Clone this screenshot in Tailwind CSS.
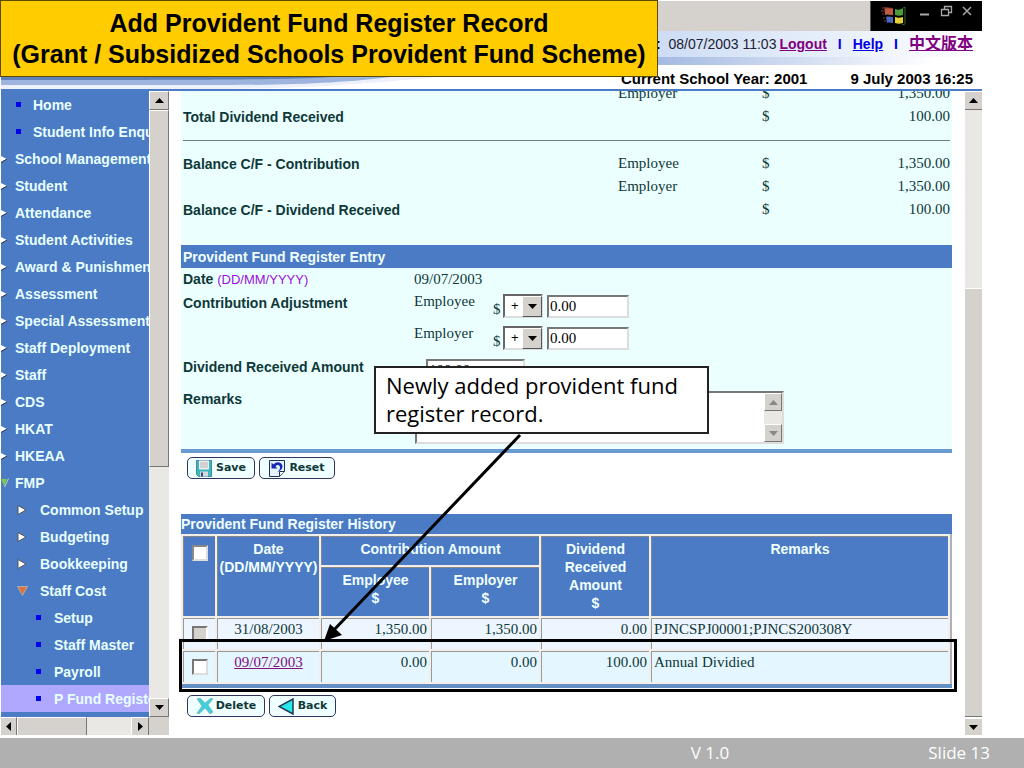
<!DOCTYPE html>
<html lang="en">
<head>
    <meta charset="UTF-8">
    <meta name="viewport" content="width=device-width, initial-scale=1.0">
    <title>Add Provident Fund Register Record</title>
    <script src="https://cdn.jsdelivr.net/npm/@tailwindcss/browser@4"></script>
</head>
<body class="relative flex flex-col min-h-screen bg-white font-['Liberation_Sans',sans-serif]">

    <!-- Browser window -->
    <div class="flex flex-col flex-1 ml-px mr-[42px] mb-[3px]">

        <header class="flex flex-col h-[91px] border-b-2 border-[#4a7bc4]">
            <div class="flex h-[31px] bg-[#d5d1cd] border-t border-white">
                <div class="flex ml-auto w-[112px] bg-black border-l border-[#555] pl-[10px] pr-2 pt-[3px] items-start">
                    <svg class="w-7 h-6" viewBox="0 0 28 24">
                        <path d="M3 3l9 1v7l-8-1z" fill="#8c3b2c"/>
                        <path d="M4 5c3-1 5 0 8 0v6c-3 0-5-1-8 0z" fill="#c05a40"/>
                        <path d="M14 5c3 1 5 1 8-1v7c-3 1-5 1-8 0z" fill="#4f9b3c"/>
                        <path d="M5 13c3-1 5 0 7 0v6c-2 0-4-1-6 0z" fill="#4b66b8"/>
                        <path d="M14 13c3 1 5 1 8 0v6c-3 1-5 1-8 0z" fill="#e2cf3a"/>
                        <path d="M22 4l2-1v17l-3 1" fill="none" stroke="#2f6a35"/>
                        <path d="M1 4h2M0 7h3M1 10h2M2 14h2M3 17h2" stroke="#7a3a30"/>
                    </svg>
                    <svg class="ml-auto w-[54px] h-4" viewBox="0 0 54 16" fill="none" stroke="#a8a8a8">
                        <path d="M0 10.500h9" stroke-width="2"/>
                        <path d="M24.500 5.500v-3h7v6h-3M21.500 5.500h7v6h-7z" stroke-width="1.300"/>
                        <path d="M43 3l8 8M51 3l-8 8" stroke-width="1.500"/>
                    </svg>
                </div>
            </div>
            <div class="flex items-center justify-end h-[26px] pr-[9px] gap-[11px] text-sm whitespace-nowrap bg-linear-to-r from-[#c3d5f2] from-60% to-white">
                <span class="-mr-2 text-black"><b>Login :</b>&nbsp; <span class="text-[#223]">08/07/2003 11:03</span></span>
                <a href="#" class="font-bold underline text-[#800080]">Logout</a>
                <b class="text-[#0000e0]">I</b>
                <a href="#" class="font-bold underline text-[#0000e0]">Help</a>
                <b class="text-[#0000e0]">I</b>
                <a href="#" class="font-bold underline text-base text-[#800080] font-['Liberation_Sans','Noto_Sans_CJK_TC',sans-serif]">中文版本</a>
            </div>
            <div class="h-2 bg-linear-to-r from-[#8ea9da] from-60% to-white to-95%"></div>
            <div class="relative flex flex-1 items-end justify-end pr-[9px] gap-[43px] text-[15px] leading-5 font-bold text-black whitespace-nowrap">
                <svg class="absolute left-0 bottom-0 w-[440px] h-3" viewBox="0 0 440 12" preserveAspectRatio="none">
                    <path d="M0 0h440C400 3 330 11 230 12H0z" fill="#eef1fb"/>
                    <path d="M0 0h390C350 5 300 8 230 8H0z" fill="#9db4de"/>
                    <path d="M0 0h330C300 2 260 3 0 3z" fill="#5f80bb"/>
                </svg>
                <span>Current School Year: 2001</span>
                <span>9 July 2003 16:25</span>
            </div>
        </header>

        <div class="flex flex-1">

            <!-- Menu -->
            <div class="flex flex-col w-[168px]">
                <div class="flex flex-1">
                    <nav class="w-[148px] overflow-hidden bg-[#4a7bc4] text-sm font-bold text-[#e8ffff] whitespace-nowrap">
                        <a href="#" class="flex items-center h-[27px] pl-[15px] gap-3"><i class="w-[5px] h-[5px] shrink-0 bg-[#0000f0]"></i>Home</a>
                        <a href="#" class="flex items-center h-[27px] pl-[15px] gap-3"><i class="w-[5px] h-[5px] shrink-0 bg-[#0000f0]"></i>Student Info Enquiry</a>
                        <a href="#" class="flex items-center h-[27px] gap-2"><svg class="w-[6px] h-2 shrink-0" viewBox="0 0 6 8"><path d="M0 1l6 3-6 3z" fill="#fff"/><path d="M0 7.500l6-3.500" stroke="#333"/></svg>School Management</a>
                        <a href="#" class="flex items-center h-[27px] gap-2"><svg class="w-[6px] h-2 shrink-0" viewBox="0 0 6 8"><path d="M0 1l6 3-6 3z" fill="#fff"/><path d="M0 7.500l6-3.500" stroke="#333"/></svg>Student</a>
                        <a href="#" class="flex items-center h-[27px] gap-2"><svg class="w-[6px] h-2 shrink-0" viewBox="0 0 6 8"><path d="M0 1l6 3-6 3z" fill="#fff"/><path d="M0 7.500l6-3.500" stroke="#333"/></svg>Attendance</a>
                        <a href="#" class="flex items-center h-[27px] gap-2"><svg class="w-[6px] h-2 shrink-0" viewBox="0 0 6 8"><path d="M0 1l6 3-6 3z" fill="#fff"/><path d="M0 7.500l6-3.500" stroke="#333"/></svg>Student Activities</a>
                        <a href="#" class="flex items-center h-[27px] gap-2"><svg class="w-[6px] h-2 shrink-0" viewBox="0 0 6 8"><path d="M0 1l6 3-6 3z" fill="#fff"/><path d="M0 7.500l6-3.500" stroke="#333"/></svg>Award &amp; Punishment</a>
                        <a href="#" class="flex items-center h-[27px] gap-2"><svg class="w-[6px] h-2 shrink-0" viewBox="0 0 6 8"><path d="M0 1l6 3-6 3z" fill="#fff"/><path d="M0 7.500l6-3.500" stroke="#333"/></svg>Assessment</a>
                        <a href="#" class="flex items-center h-[27px] gap-2"><svg class="w-[6px] h-2 shrink-0" viewBox="0 0 6 8"><path d="M0 1l6 3-6 3z" fill="#fff"/><path d="M0 7.500l6-3.500" stroke="#333"/></svg>Special Assessment</a>
                        <a href="#" class="flex items-center h-[27px] gap-2"><svg class="w-[6px] h-2 shrink-0" viewBox="0 0 6 8"><path d="M0 1l6 3-6 3z" fill="#fff"/><path d="M0 7.500l6-3.500" stroke="#333"/></svg>Staff Deployment</a>
                        <a href="#" class="flex items-center h-[27px] gap-2"><svg class="w-[6px] h-2 shrink-0" viewBox="0 0 6 8"><path d="M0 1l6 3-6 3z" fill="#fff"/><path d="M0 7.500l6-3.500" stroke="#333"/></svg>Staff</a>
                        <a href="#" class="flex items-center h-[27px] gap-2"><svg class="w-[6px] h-2 shrink-0" viewBox="0 0 6 8"><path d="M0 1l6 3-6 3z" fill="#fff"/><path d="M0 7.500l6-3.500" stroke="#333"/></svg>CDS</a>
                        <a href="#" class="flex items-center h-[27px] gap-2"><svg class="w-[6px] h-2 shrink-0" viewBox="0 0 6 8"><path d="M0 1l6 3-6 3z" fill="#fff"/><path d="M0 7.500l6-3.500" stroke="#333"/></svg>HKAT</a>
                        <a href="#" class="flex items-center h-[27px] gap-2"><svg class="w-[6px] h-2 shrink-0" viewBox="0 0 6 8"><path d="M0 1l6 3-6 3z" fill="#fff"/><path d="M0 7.500l6-3.500" stroke="#333"/></svg>HKEAA</a>
                        <a href="#" class="flex items-center h-[27px] gap-[6px]"><svg class="w-2 h-[10px] shrink-0" viewBox="0 0 8 10"><path d="M0 1h6L3 8z" fill="#7cc850"/><path d="M7.500 0.500L3.500 9" stroke="#c8d8b0"/></svg>FMP</a>
                        <a href="#" class="flex items-center h-[27px] pl-4 gap-[13px]"><svg class="w-[10px] h-[10px] shrink-0" viewBox="0 0 10 10"><path d="M1 0.500v9L9 5z" fill="#fff" stroke="#555"/></svg>Common Setup</a>
                        <a href="#" class="flex items-center h-[27px] pl-4 gap-[13px]"><svg class="w-[10px] h-[10px] shrink-0" viewBox="0 0 10 10"><path d="M1 0.500v9L9 5z" fill="#fff" stroke="#555"/></svg>Budgeting</a>
                        <a href="#" class="flex items-center h-[27px] pl-4 gap-[13px]"><svg class="w-[10px] h-[10px] shrink-0" viewBox="0 0 10 10"><path d="M1 0.500v9L9 5z" fill="#fff" stroke="#555"/></svg>Bookkeeping</a>
                        <a href="#" class="flex items-center h-[27px] pl-4 gap-3"><svg class="w-[11px] h-[10px] shrink-0" viewBox="0 0 11 10"><path d="M0.500 0.500h10L5.500 9.500z" fill="#e0713a" stroke="#a8b0b0"/></svg>Staff Cost</a>
                        <a href="#" class="flex items-center h-[27px] pl-[35px] gap-[13px]"><i class="w-[5px] h-[5px] shrink-0 bg-[#0000f0]"></i>Setup</a>
                        <a href="#" class="flex items-center h-[27px] pl-[35px] gap-[13px]"><i class="w-[5px] h-[5px] shrink-0 bg-[#0000f0]"></i>Staff Master</a>
                        <a href="#" class="flex items-center h-[27px] pl-[35px] gap-[13px]"><i class="w-[5px] h-[5px] shrink-0 bg-[#0000f0]"></i>Payroll</a>
                        <a href="#" class="flex items-center h-[27px] pl-[35px] gap-[13px] bg-[#b0a8ff]"><i class="w-[5px] h-[5px] shrink-0 bg-[#0000f0]"></i>P Fund Register</a>
                    </nav>
                    <div class="flex flex-col w-5 bg-[#e9e8e5]">
                        <div class="flex items-center justify-center h-[19px] bg-[#d5d1cd] border border-t-white border-l-white border-r-[#777] border-b-[#777]"><svg class="w-[9px] h-[5px]" viewBox="0 0 9 5"><path d="M0 5h9L4.500 0z"/></svg></div>
                        <div class="basis-[57%] bg-[#d5d1cd] border border-t-white border-l-white border-r-[#777] border-b-[#777]"></div>
                        <div class="flex items-center justify-center h-[19px] mt-auto bg-[#d5d1cd] border border-t-white border-l-white border-r-[#777] border-b-[#777]"><svg class="w-[9px] h-[5px]" viewBox="0 0 9 5"><path d="M0 0h9L4.500 5z"/></svg></div>
                    </div>
                </div>
                <div class="flex h-[18px] bg-[#e9e8e5]">
                    <div class="flex items-center justify-center w-4 bg-[#d5d1cd] border-t border-r border-t-white border-r-[#777]"><svg class="w-[5px] h-[9px]" viewBox="0 0 5 9"><path d="M5 0v9L0 4.500z"/></svg></div>
                    <div class="w-[70px] bg-[#d5d1cd] border-l border-t border-r border-l-white border-t-white border-r-[#777]"></div>
                    <div class="flex items-center justify-center w-[18px] ml-auto bg-[#d5d1cd] border-l border-t border-r border-l-white border-t-white border-r-[#777]"><svg class="w-[5px] h-[9px]" viewBox="0 0 5 9"><path d="M0 0v9l5-4.500z"/></svg></div>
                    <div class="w-5 bg-[#d5d1cd]"></div>
                </div>
            </div>

            <!-- Register page -->
            <main class="flex-1 min-w-0 pl-3 pr-[13px] overflow-hidden text-sm text-[#0f3838]">
                <section class="flow-root overflow-hidden pb-[5px] bg-[#ebffff] border-b-4 border-[#6a9bd0]">
                    <div class="-mt-[9px] px-[2px]">
                        <div class="grid grid-cols-[435px_144px_1fr] items-center h-[23px] text-[15px] font-['Liberation_Serif',serif]">
                            <span></span><span>Employer</span><span class="flex justify-between"><span>$</span><span>1,350.00</span></span>
                        </div>
                        <div class="grid grid-cols-[435px_144px_1fr] items-center h-[23px] text-[15px] font-['Liberation_Serif',serif]">
                            <b class="text-sm font-['Liberation_Sans',sans-serif]">Total Dividend Received</b><span></span><span class="flex justify-between"><span>$</span><span>100.00</span></span>
                        </div>
                        <hr class="mt-3 mb-[11px] border-[#6f8080]">
                        <div class="grid grid-cols-[435px_144px_1fr] items-center h-[23px] text-[15px] font-['Liberation_Serif',serif]">
                            <b class="text-sm font-['Liberation_Sans',sans-serif]">Balance C/F - Contribution</b><span>Employee</span><span class="flex justify-between"><span>$</span><span>1,350.00</span></span>
                        </div>
                        <div class="grid grid-cols-[435px_144px_1fr] items-center h-[23px] text-[15px] font-['Liberation_Serif',serif]">
                            <span></span><span>Employer</span><span class="flex justify-between"><span>$</span><span>1,350.00</span></span>
                        </div>
                        <div class="grid grid-cols-[435px_144px_1fr] items-center h-[23px] text-[15px] font-['Liberation_Serif',serif]">
                            <b class="text-sm font-['Liberation_Sans',sans-serif]">Balance C/F - Dividend Received</b><span></span><span class="flex justify-between"><span>$</span><span>100.00</span></span>
                        </div>
                    </div>

                    <h2 class="mt-6 h-[23px] px-[2px] leading-[25px] font-bold bg-[#4a7bc4] text-[#f0ffff]">Provident Fund Register Entry</h2>
                    <form class="px-[2px]">
                        <div class="grid grid-cols-[231px_1fr] h-[23px] items-center">
                            <b>Date <span class="font-normal text-[13px] text-[#9912d8]">(DD/MM/YYYY)</span></b>
                            <span class="text-[15px] font-['Liberation_Serif',serif]">09/07/2003</span>
                        </div>
                        <div class="grid grid-cols-[231px_79px_1fr] h-8">
                            <b class="pt-[2px]">Contribution Adjustment</b>
                            <label for="employee" class="text-[15px] font-['Liberation_Serif',serif]">Employee</label>
                            <div class="flex items-center h-[30px] text-[15px] font-['Liberation_Serif',serif]">
                                <span class="w-[10px] pt-2">$</span>
                                <div class="relative w-10 h-6 mr-1 text-black">
                                    <select aria-label="Employee sign" class="appearance-none w-full h-full pl-[6px] bg-white border-2 border-t-[#666] border-l-[#666] border-b-[#ddd] border-r-[#ddd] text-[13px] font-['Liberation_Sans',sans-serif]"><option>+</option><option>-</option></select>
                                    <div class="absolute right-px top-[2px] bottom-px flex items-center justify-center w-5 bg-[#d5d1cd] border border-t-white border-l-white border-r-[#555] border-b-[#555] pointer-events-none"><svg class="w-[9px] h-[5px]" viewBox="0 0 9 5"><path d="M0 0h9L4.500 5z"/></svg></div>
                                </div>
                                <input id="employee" value="0.00" class="w-[82px] h-[23px] px-px bg-white border-2 border-t-[#777] border-l-[#777] border-b-[#ddd] border-r-[#ddd] text-black">
                            </div>
                        </div>
                        <div class="grid grid-cols-[231px_79px_1fr] h-8">
                            <span></span>
                            <label for="employer" class="text-[15px] font-['Liberation_Serif',serif]">Employer</label>
                            <div class="flex items-center h-[30px] text-[15px] font-['Liberation_Serif',serif]">
                                <span class="w-[10px] pt-2">$</span>
                                <div class="relative w-10 h-6 mr-1 text-black">
                                    <select aria-label="Employer sign" class="appearance-none w-full h-full pl-[6px] bg-white border-2 border-t-[#666] border-l-[#666] border-b-[#ddd] border-r-[#ddd] text-[13px] font-['Liberation_Sans',sans-serif]"><option>+</option><option>-</option></select>
                                    <div class="absolute right-px top-[2px] bottom-px flex items-center justify-center w-5 bg-[#d5d1cd] border border-t-white border-l-white border-r-[#555] border-b-[#555] pointer-events-none"><svg class="w-[9px] h-[5px]" viewBox="0 0 9 5"><path d="M0 0h9L4.500 5z"/></svg></div>
                                </div>
                                <input id="employer" value="0.00" class="w-[82px] h-[23px] px-px bg-white border-2 border-t-[#777] border-l-[#777] border-b-[#ddd] border-r-[#ddd] text-black">
                            </div>
                        </div>
                        <div class="grid grid-cols-[243px_1fr] h-8 mt-1">
                            <label for="dividend" class="font-bold leading-4">Dividend Received Amount</label>
                            <input id="dividend" value="100.00" class="w-[99px] h-[23px] px-px bg-white border-2 border-t-[#777] border-l-[#777] border-b-[#ddd] border-r-[#ddd] text-[15px] font-['Liberation_Serif',serif] text-black">
                        </div>
                        <div class="grid grid-cols-[232px_1fr]">
                            <label for="remarks" class="font-bold leading-4">Remarks</label>
                            <div class="flex w-[369px] h-[53px] bg-white border-2 border-t-[#777] border-l-[#777] border-b-[#ddd] border-r-[#ddd]">
                                <textarea id="remarks" class="flex-1 resize-none"></textarea>
                                <div class="flex flex-col justify-between w-[18px] bg-[#e9e8e5]">
                                    <div class="flex items-center justify-center h-[18px] bg-[#d5d1cd] border border-t-white border-l-white border-r-[#777] border-b-[#777]"><svg class="w-[9px] h-[5px]" viewBox="0 0 9 5"><path d="M0 5h9L4.500 0z" fill="#888"/></svg></div>
                                    <div class="flex items-center justify-center h-[18px] bg-[#d5d1cd] border border-t-white border-l-white border-r-[#777] border-b-[#777]"><svg class="w-[9px] h-[5px]" viewBox="0 0 9 5"><path d="M0 0h9L4.500 5z" fill="#888"/></svg></div>
                                </div>
                            </div>
                        </div>
                    </form>
                </section>

                <div class="flex gap-1 mt-[4px] ml-[6px] text-[11px] font-bold font-['DejaVu_Sans',sans-serif]">
                    <button class="flex items-center justify-center gap-1 w-[68px] h-[22px] bg-[#f0ffff] border border-[#2d3560] rounded-[5px]">
                        <svg class="w-4 h-[17px]" viewBox="0 0 16 17"><path d="M0.500 0.500h15v16h-13l-2-2z" fill="#38b8c0" stroke="#4a8a98"/><path d="M3 0.500h10v9H3z" fill="#f0eeec"/><path d="M4 3h8M4 5h8M4 7h8" stroke="#b8b4b8"/><path d="M4 11.500h8v5H4z" fill="#d8d8e0"/><path d="M5 12.500h2v4H5z" fill="#385070"/></svg>Save
                    </button>
                    <button class="flex items-center justify-center gap-1 w-[76px] h-[22px] bg-[#f0ffff] border border-[#2d3560] rounded-[5px]">
                        <svg class="w-4 h-[17px]" viewBox="0 0 16 17"><path d="M0.500 0.500h15v11l-5 5h-10z" fill="#e4f4ff" stroke="#203050"/><path d="M10.500 16v-4.500h5" fill="#fff" stroke="#203050"/><path d="M2.500 2.500v6h6l-2-2c2-2.500 4.500-1.500 4.500 1 0 2-1 3-3 5 4-2 5.500-4 5.500-6 0-4-5.500-6-9-2z" fill="#1828b0"/></svg>Reset
                    </button>
                </div>

                <h2 class="mt-[35px] h-5 leading-5 font-bold bg-[#4a7bc4] text-[#f0ffff]">Provident Fund Register History</h2>
                <table class="w-full table-fixed border-separate border-spacing-[2px] bg-[#f2eeea] border-r-2 border-[#b0b0b8] text-left">
                    <colgroup><col class="w-8"><col class="w-[102px]"><col class="w-[108px]"><col class="w-[108px]"><col class="w-[108px]"><col></colgroup>
                    <thead class="bg-[#4a7bc4] text-center text-[#f0ffff] leading-[18px] align-top">
                        <tr class="h-[29px]">
                            <th rowspan="2" class="border-t border-l border-[#888] pt-2"><input type="checkbox" aria-label="Select all" class="appearance-none block mx-auto w-4 h-4 bg-white border-2 border-t-[#888] border-l-[#888] border-b-[#ddd] border-r-[#ddd]"></th>
                            <th rowspan="2" class="border-t border-l border-[#888] pt-[3px] whitespace-nowrap">Date<br>(DD/MM/YYYY)</th>
                            <th colspan="2" class="border-t border-l border-[#888] pt-[3px]">Contribution Amount</th>
                            <th rowspan="2" class="border-t border-l border-[#888] pt-[3px]">Dividend<br>Received<br>Amount<br>$</th>
                            <th rowspan="2" class="border-t border-l border-[#888] pt-[3px]">Remarks</th>
                        </tr>
                        <tr class="h-[49px]">
                            <th class="border-t border-l border-[#888] pt-[3px]">Employee<br>$</th>
                            <th class="border-t border-l border-[#888] pt-[3px]">Employer<br>$</th>
                        </tr>
                    </thead>
                    <tbody class="text-[15px] leading-5 font-['Liberation_Serif',serif] align-top">
                        <tr class="h-[31px] bg-[#edf5ff]">
                            <td class="border-t border-l border-[#999] pt-[7px]"><input type="checkbox" disabled aria-label="Select 31/08/2003" class="appearance-none block mx-auto w-4 h-4 bg-[#d5d1cd] border-2 border-t-[#777] border-l-[#777] border-b-white border-r-white"></td>
                            <td class="border-t border-l border-[#999] text-center">31/08/2003</td>
                            <td class="border-t border-l border-[#999] pr-[2px] text-right">1,350.00</td>
                            <td class="border-t border-l border-[#999] pr-[2px] text-right">1,350.00</td>
                            <td class="border-t border-l border-[#999] pr-[2px] text-right">0.00</td>
                            <td class="border-t border-l border-[#999] pl-[2px]">PJNCSPJ00001;PJNCS200308Y</td>
                        </tr>
                        <tr class="h-[31px] bg-[#e4f6ff]">
                            <td class="border-t border-l border-[#999] pt-[7px]"><input type="checkbox" aria-label="Select 09/07/2003" class="appearance-none block mx-auto w-4 h-4 bg-white border-2 border-t-[#777] border-l-[#777] border-b-[#ddd] border-r-[#ddd]"></td>
                            <td class="border-t border-l border-[#999] text-center"><a href="#" class="underline text-[#80107c]">09/07/2003</a></td>
                            <td class="border-t border-l border-[#999] pr-[2px] text-right">0.00</td>
                            <td class="border-t border-l border-[#999] pr-[2px] text-right">0.00</td>
                            <td class="border-t border-l border-[#999] pr-[2px] text-right">100.00</td>
                            <td class="border-t border-l border-[#999] pl-[2px]">Annual Dividied</td>
                        </tr>
                    </tbody>
                </table>
                <div class="h-1 bg-[#6490c4]"></div>
                <div class="flex gap-1 mt-[7px] ml-[6px] text-[11px] font-bold font-['DejaVu_Sans',sans-serif]">
                    <button class="flex items-center justify-center gap-[2px] w-[78px] h-[22px] bg-[#f0ffff] border border-[#2d3560] rounded-[5px]">
                        <svg class="w-[18px] h-4" viewBox="0 0 18 16"><path d="M1 1l3-1 5 5 6-5 2 1-5 6 5 7-3 2-5-6-6 6-2-1 5-7z" fill="#40d0d8" stroke="#78a8b0" stroke-width=".6"/></svg>Delete
                    </button>
                    <button class="flex items-center justify-center gap-1 w-[67px] h-[22px] bg-[#f0ffff] border border-[#2d3560] rounded-[5px]">
                        <svg class="w-4 h-[17px]" viewBox="0 0 16 17"><path d="M15 1v15L1 8.500z" fill="#28e8e8" stroke="#203858" stroke-width="1.500"/></svg>Back
                    </button>
                </div>
            </main>

            <div class="flex flex-col w-[17px] bg-[#e9e8e5] border-t border-white">
                <div class="flex items-center justify-center h-[18px] bg-[#d5d1cd] border-b border-[#777]"><svg class="w-[9px] h-[5px]" viewBox="0 0 9 5"><path d="M0 5h9L4.500 0z"/></svg></div>
                <div class="basis-[178px] shrink-0"></div>
                <div class="flex-1 bg-[#d5d1cd] border-t border-b border-t-white border-b-[#777]"></div>
                <div class="flex items-center justify-center h-[18px] bg-[#d5d1cd] border-t-2 border-white"><svg class="w-[9px] h-[5px]" viewBox="0 0 9 5"><path d="M0 0h9L4.500 5z"/></svg></div>
            </div>
        </div>
    </div>

    <footer class="flex justify-end items-center h-[30px] pr-[34px] gap-[199px] bg-[#b0b0b0] text-white text-[17px] font-['Open_Sans',sans-serif]">
        <span>V 1.0</span>
        <span>Slide 13</span>
    </footer>

    <!-- Slide annotations -->
    <h1 class="absolute left-0 top-0 w-[658px] h-[77px] pt-[7px] bg-[#ffcc00] border border-[#5a4a00] text-center text-[25px] leading-[31px] font-bold text-black whitespace-nowrap">Add Provident Fund Register Record<br>(Grant / Subsidized Schools Provident Fund Scheme)</h1>
    <div class="absolute left-[179px] top-[639px] w-[778px] h-[53px] border-[3px] border-black"></div>
    <svg class="absolute left-[320px] top-[430px] w-[206px] h-[214px]" viewBox="0 0 206 214">
        <path d="M200 5L12 202" stroke="#000" stroke-width="3"/>
        <path d="M4 211l6-17 12 11z"/>
    </svg>
    <p class="absolute left-[374px] top-[366px] w-[335px] h-[68px] pl-[10px] pt-[3px] bg-white border-2 border-[#222] text-[22px] leading-7 text-black font-['Open_Sans',sans-serif]">Newly added provident fund<br>register record.</p>
</body>
</html>
